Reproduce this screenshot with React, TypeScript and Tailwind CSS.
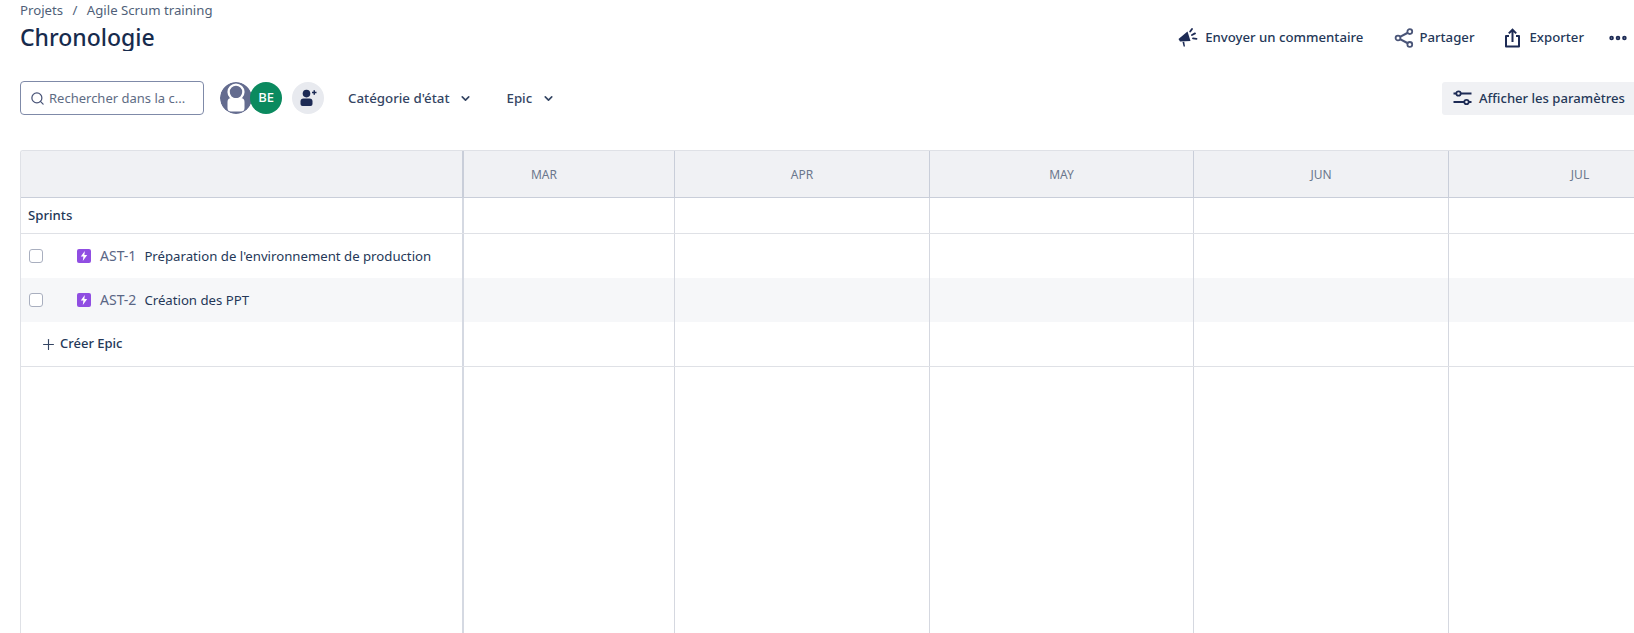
import { ChevronDown, MoreHorizontal, Plus, Search } from 'lucide-react';
import type { ReactNode } from 'react';

const months = [
  { label: 'MAR', cell: 'w-[211px] pr-[50px]' },
  { label: 'APR', cell: 'w-[255px]' },
  { label: 'MAY', cell: 'w-[264px]' },
  { label: 'JUN', cell: 'w-[255px]' },
  { label: 'JUL', cell: 'w-[263px]' },
];

const widths = ['w-[211px]', 'w-[255px]', 'w-[264px]', 'w-[255px]', 'w-[263px]'];

const MegaphoneIcon = () => (
  <svg width="20" height="20" viewBox="0 0 20 20" fill="#1d2b55">
    <path d="M0.5 11 L9.5 3.5 L12.5 13 L2 13.5 Z" />
    <path d="M4.5 14 L6.2 13.8 L7 18.5 L5.6 18.5 Z" />
    <path d="M12.2 3.6 L14 1 M14 7 L17 5.4 M15 10.4 L18.5 10.8" stroke="#1d2b55" strokeWidth="1.8" strokeLinecap="round" />
  </svg>
);

const ShareIcon = () => (
  <svg width="20" height="20" viewBox="0 0 20 20" fill="none" stroke="#4a5578" strokeWidth="1.8">
    <circle cx="4" cy="10" r="2.4" />
    <circle cx="15.8" cy="3.6" r="2.4" />
    <circle cx="15.8" cy="16.4" r="2.4" />
    <path d="M6 8.9 L13.8 4.7 M6 11.1 L13.8 15.3" strokeWidth="2.2" />
  </svg>
);

const ExportIcon = () => (
  <svg width="19" height="20" viewBox="0 0 19 20" fill="none" stroke="#1d2b55" strokeWidth="2">
    <path d="M6 8 H3 V18.5 H16 V8 H13" strokeLinejoin="round" />
    <path d="M9.5 14 V2 M5.8 5.4 L9.5 1.7 L13.2 5.4" />
  </svg>
);

const SlidersIcon = () => (
  <svg width="19" height="16" viewBox="0 0 19 16" fill="none" stroke="#1d2b55" strokeWidth="1.8">
    <path d="M0.5 3.5 H3 M8 3.5 H18.5 M0.5 12 H11 M16 12 H18.5" />
    <circle cx="5.5" cy="3.5" r="2.2" />
    <circle cx="13.5" cy="12" r="2.2" />
  </svg>
);

const UserAvatar = () => (
  <svg width="32" height="32" viewBox="0 0 32 32" className="shrink-0 rounded-full">
    <circle cx="16" cy="16" r="16" fill="#646c8f" />
    <circle cx="16" cy="10" r="7.4" fill="none" stroke="#ffffff" strokeWidth="2.4" />
    <path d="M7.5 20 Q7.5 16 11.5 16 H20.5 Q24.5 16 24.5 20 V26 Q24.5 29.5 21 29.5 H11 Q7.5 29.5 7.5 26 Z" fill="#ffffff" />
  </svg>
);

const AddPersonIcon = () => (
  <svg width="18" height="18" viewBox="0 0 18 18" fill="#1d2b55">
    <circle cx="7.5" cy="4.6" r="3.8" />
    <path d="M1.5 12.5 Q1.5 9.5 4.5 9.5 H10.5 Q13.5 9.5 13.5 12.5 V15 Q13.5 17 11.5 17 H3.5 Q1.5 17 1.5 15 Z" />
    <path d="M13 3.5 H17.5 M15.25 1.2 V5.8" stroke="#1d2b55" strokeWidth="1.5" fill="none" />
  </svg>
);

const EpicIcon = () => (
  <span className="flex h-[14px] w-[14px] shrink-0 items-center justify-center rounded-[2px] bg-[#904ee2]">
    <svg width="8" height="10" viewBox="0 0 8 10" fill="#ffffff">
      <path d="M4.8 0 L0.8 5.6 H3.4 L2.8 10 L7.2 4 H4.4 Z" />
    </svg>
  </span>
);

const ToolbarAction = ({ icon, label, className }: { icon: ReactNode; label: string; className: string }) => (
  <div className={`flex items-center ${className}`}>
    {icon}
    <span className="text-[13.2px] font-medium text-[#253858]">{label}</span>
  </div>
);

const MonthCells = () => (
  <>
    {widths.map((w, i) => (
      <div key={i} className={`${w} shrink-0 border-r border-[#d5d8e0]`} />
    ))}
  </>
);

const Row = ({ left, className = '' }: { left?: ReactNode; className?: string }) => (
  <div className={`flex shrink-0 border-b border-[#dfe1e6] ${className}`}>
    <div className="flex w-[443px] shrink-0 items-center border-r-2 border-[#d5d9e2]">{left}</div>
    <MonthCells />
  </div>
);

const EpicRow = ({ id, title, className }: { id: string; title: string; className: string }) => (
  <div className={`flex h-[44px] shrink-0 ${className}`}>
    <div className="flex w-[443px] shrink-0 items-center border-r-2 border-[#d5d9e2] pl-[8px]">
      <span className="h-[14px] w-[14px] shrink-0 rounded-[3px] border border-[#a9afbf] bg-white" />
      <span className="ml-[34px]"><EpicIcon /></span>
      <div className="ml-[9px] flex items-baseline">
        <span className="text-[14px] text-[#5a6685]">{id}</span>
        <span className="ml-[8px] text-[13.2px] text-[#253858]">{title}</span>
      </div>
    </div>
    <MonthCells />
  </div>
);

export default function App() {
  return (
    <div className="flex h-[633px] w-[1634px] flex-col overflow-hidden bg-white font-['Noto_Sans',sans-serif] text-[#172b4d]">
      <div className="flex h-[52px] shrink-0 items-start justify-between pl-[20px]">
        <div>
          <div className="h-[20px] text-[13.2px] leading-[20px] text-[#505f79]">
            Projets <span className="mx-[6px]">/</span> Agile Scrum training
          </div>
          <h1 className="h-[31px] overflow-hidden text-[23px] font-medium leading-[34px] text-[#172b4d]">Chronologie</h1>
        </div>
        <div className="mt-[27px] flex items-center pr-[5px]">
          <ToolbarAction icon={<MegaphoneIcon />} label="Envoyer un commentaire" className="gap-[7px]" />
          <ToolbarAction icon={<ShareIcon />} label="Partager" className="ml-[31px] gap-[5px]" />
          <ToolbarAction icon={<ExportIcon />} label="Exporter" className="ml-[29px] gap-[7px]" />
          <MoreHorizontal size={22} color="#1d2b55" strokeWidth={3} className="ml-[23px]" />
        </div>
      </div>

      <div className="mt-[29px] flex h-[34px] shrink-0 items-center justify-between pl-[20px]">
        <div className="flex items-center">
          <div className="flex h-[34px] w-[184px] items-center rounded-[4px] border border-[#7f8aa8] pl-[9px]">
            <Search size={15} color="#4a5578" strokeWidth={2} />
            <span className="ml-[4px] pt-[2px] text-[13px] text-[#5e6c84]">Rechercher dans la c...</span>
          </div>
          <div className="ml-[16px] flex items-center">
            <UserAvatar />
            <span className="-ml-[2px] flex h-[32px] w-[32px] items-center justify-center rounded-full bg-[#0b8a5f] text-[13px] font-medium text-white">BE</span>
          </div>
          <span className="ml-[10px] flex h-[32px] w-[32px] items-center justify-center rounded-full bg-[#e8eaef]">
            <AddPersonIcon />
          </span>
          <div className="ml-[24px] flex items-center gap-[10px]">
            <span className="pt-[2px] text-[13.3px] font-medium text-[#344563]">Catégorie d'état</span>
            <ChevronDown size={13} color="#344563" strokeWidth={3} />
          </div>
          <div className="ml-[34px] flex items-center gap-[10px]">
            <span className="pt-[2px] text-[13.3px] font-medium text-[#344563]">Epic</span>
            <ChevronDown size={13} color="#344563" strokeWidth={3} />
          </div>
        </div>
        <div className="flex h-[33px] w-[192px] items-center gap-[7px] rounded-l-[3px] bg-[#f0f1f4] pl-[11px]">
          <SlidersIcon />
          <span className="whitespace-nowrap pt-[2px] text-[13.1px] font-medium text-[#253858]">Afficher les paramètres</span>
        </div>
      </div>

      <div className="ml-[20px] mt-[35px] flex min-h-0 flex-1 flex-col overflow-hidden rounded-tl-[3px] border-l border-t border-[#dfe1e6]">
        <div className="flex h-[47px] shrink-0 border-b border-[#c9ced9] bg-[#f0f1f4]">
          <div className="w-[443px] shrink-0 border-r-2 border-[#c9ced9]" />
          {months.map(m => (
            <div key={m.label} className={`${m.cell} flex shrink-0 items-center justify-center border-r border-[#c9ced9] pt-[1px] text-[12px] text-[#6b778c]`}>
              {m.label}
            </div>
          ))}
        </div>
        <Row
          className="h-[36px]"
          left={<span className="pl-[7px] text-[13.2px] font-medium text-[#253858]">Sprints</span>}
        />
        <EpicRow id="AST-1" title="Préparation de l'environnement de production" className="" />
        <EpicRow id="AST-2" title="Création des PPT" className="bg-[#f6f7f9]" />
        <Row
          className="h-[45px]"
          left={
            <div className="flex items-center pl-[19px]">
              <Plus size={17} color="#344563" strokeWidth={1.6} />
              <span className="ml-[3px] text-[13px] font-medium text-[#253858]">Créer Epic</span>
            </div>
          }
        />
        <div className="flex min-h-0 flex-1">
          <div className="w-[443px] shrink-0 border-r-2 border-[#d5d9e2]" />
          <MonthCells />
        </div>
      </div>
    </div>
  );
}
